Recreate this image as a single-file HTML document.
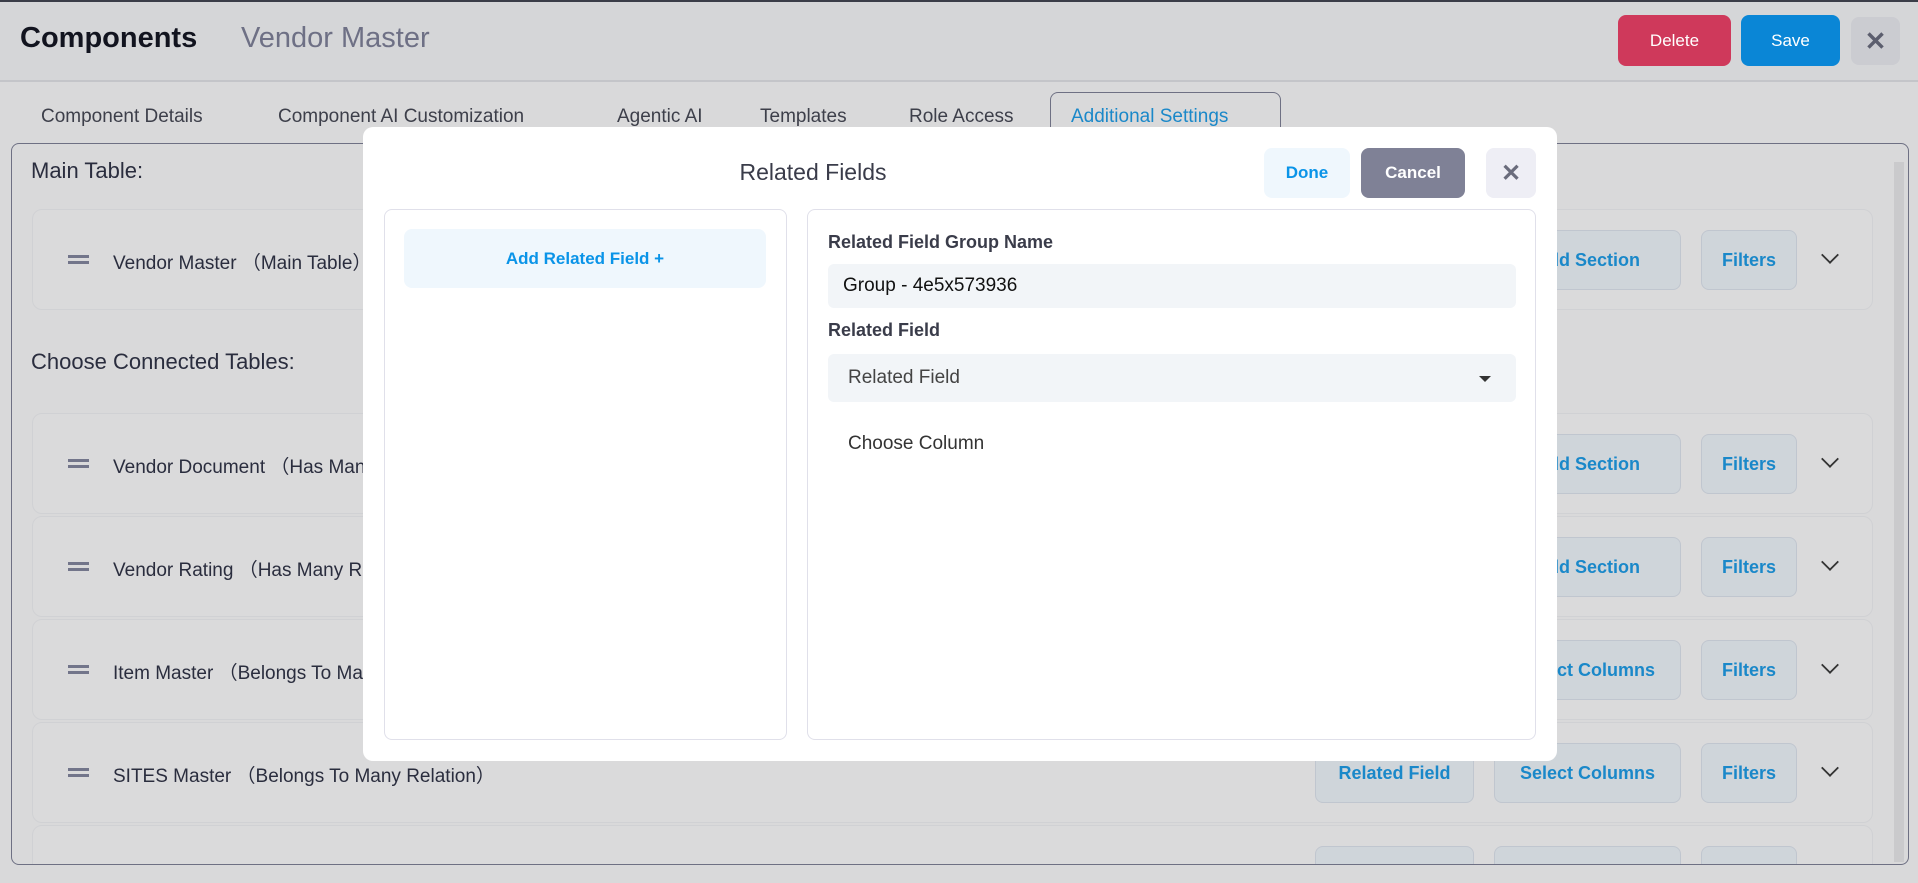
<!DOCTYPE html>
<html><head><meta charset="utf-8"><style>
*{box-sizing:border-box;margin:0;padding:0}
body{width:1918px;height:883px;overflow:hidden;background:#d9d9da;font-family:"Liberation Sans",sans-serif;position:relative;color:#2a2d3e}
.a{position:absolute}
.hdr{left:0;top:0;width:1918px;height:82px;background:#d5d6d8;border-bottom:2px solid #c4c5c9;border-top:2px solid #3a3d48}
.btn{position:absolute;display:flex;align-items:center;justify-content:center;border-radius:8px;font-weight:bold;font-size:17px}
.tab{position:absolute;top:106px;font-size:19px;color:#3d3f4a}
.panel{left:11px;top:143px;width:1898px;height:722px;border:1.5px solid #6e7083;border-radius:8px;overflow:hidden}
.row{position:absolute;left:20px;width:1841px;height:101px;border:1.5px solid #d0d1d4;border-radius:10px;background:#dadadb}
.row .t{position:absolute;left:80px;top:38px;font-size:19px;color:#2a2d3e}
.row .h{position:absolute;left:35px;top:45px;width:21px;height:3px;background:#72758a;box-shadow:0 6px 0 #72758a}
.rb{position:absolute;top:20px;height:60px;border:1.5px solid #c0c6cf;border-radius:8px;background:#cfd5da;color:#1a88c9;font-weight:bold;font-size:18px;display:flex;align-items:center;justify-content:center}
.chev{position:absolute;left:1790px;top:38px;width:14px;height:14px;border-right:2px solid #333;border-bottom:2px solid #333;transform:rotate(45deg) scale(.9,.9)}
.modal{left:363px;top:127px;width:1194px;height:634px;background:#fff;border-radius:10px}
.lbl{position:absolute;font-weight:bold;font-size:18px;color:#3a3c4a}
</style></head><body>
<div class="a hdr"></div>
<div class="a" style="left:20px;top:22px;font-size:29px;font-weight:bold;color:#12141f">Components</div>
<div class="a" style="left:241px;top:22px;font-size:29px;color:#6e7085">Vendor Master</div>
<div class="btn" style="left:1618px;top:15px;width:113px;height:51px;background:#cf395b;color:#fff;font-weight:normal">Delete</div>
<div class="btn" style="left:1741px;top:15px;width:99px;height:51px;background:#0a86d6;color:#fff;font-weight:normal">Save</div>
<div class="btn" style="left:1851px;top:17px;width:49px;height:48px;background:#cbccd1;color:#5c5e6e;font-size:26px">✕</div>
<div class="tab" style="left:41px">Component Details</div>
<div class="tab" style="left:278px">Component AI Customization</div>
<div class="tab" style="left:617px">Agentic AI</div>
<div class="tab" style="left:760px">Templates</div>
<div class="tab" style="left:909px">Role Access</div>
<div class="a" style="left:1050px;top:92px;width:231px;height:60px;border:1.5px solid #6e7083;border-bottom:none;border-radius:8px 8px 0 0;background:#d9d9da"></div>
<div class="tab" style="left:1071px;color:#1a88c9">Additional Settings</div>
<div class="a panel">
<div class="a" style="left:19px;top:14px;font-size:22px;color:#2a2d3e">Main Table:</div>
<div class="row" style="top:65px"><div class="h"></div><div class="t">Vendor Master （Main Table）</div>
<div class="rb" style="left:1461px;width:187px">Add Section</div><div class="rb" style="left:1668px;width:96px">Filters</div><div class="chev"></div></div>
<div class="a" style="left:19px;top:205px;font-size:22px;color:#2a2d3e">Choose Connected Tables:</div>
<div class="row" style="top:269px"><div class="h"></div><div class="t">Vendor Document （Has Many Relation）</div>
<div class="rb" style="left:1461px;width:187px">Add Section</div><div class="rb" style="left:1668px;width:96px">Filters</div><div class="chev"></div></div>
<div class="row" style="top:372px"><div class="h"></div><div class="t">Vendor Rating （Has Many Relation）</div>
<div class="rb" style="left:1461px;width:187px">Add Section</div><div class="rb" style="left:1668px;width:96px">Filters</div><div class="chev"></div></div>
<div class="row" style="top:475px"><div class="h"></div><div class="t">Item Master （Belongs To Many Relation）</div>
<div class="rb" style="left:1282px;width:159px">Related Field</div><div class="rb" style="left:1461px;width:187px">Select Columns</div><div class="rb" style="left:1668px;width:96px">Filters</div><div class="chev"></div></div>
<div class="row" style="top:578px"><div class="h"></div><div class="t">SITES Master （Belongs To Many Relation）</div>
<div class="rb" style="left:1282px;width:159px">Related Field</div><div class="rb" style="left:1461px;width:187px">Select Columns</div><div class="rb" style="left:1668px;width:96px">Filters</div><div class="chev"></div></div>
<div class="row" style="top:681px"><div class="rb" style="left:1282px;width:159px"></div><div class="rb" style="left:1461px;width:187px"></div><div class="rb" style="left:1668px;width:96px"></div></div>
<div class="a" style="left:1882px;top:18px;width:10px;height:700px;background:#cacacc"></div>
</div>
<div class="a modal">
<div class="a" style="left:0;width:900px;top:32px;text-align:center;font-size:23px;color:#3a3c4a">Related Fields</div>
<div class="btn" style="left:901px;top:21px;width:86px;height:50px;background:#eff7fd;color:#0a94e8">Done</div>
<div class="btn" style="left:998px;top:21px;width:104px;height:50px;background:#7f8196;color:#fff">Cancel</div>
<div class="btn" style="left:1123px;top:21px;width:50px;height:50px;background:#eeeef5;color:#6a6c7c;font-size:24px">✕</div>
<div class="a" style="left:21px;top:82px;width:403px;height:531px;border:1.5px solid #e0e0ea;border-radius:8px">
<div class="btn" style="left:19px;top:19px;width:362px;height:59px;background:#eff7fd;color:#0a94e8">Add Related Field +</div></div>
<div class="a" style="left:444px;top:82px;width:729px;height:531px;border:1.5px solid #e0e0ea;border-radius:8px">
<div class="lbl" style="left:20px;top:22px">Related Field Group Name</div>
<div class="a" style="left:20px;top:54px;width:688px;height:44px;background:#f2f5f8;border-radius:6px;font-size:19px;padding:11px 15px;color:#111">Group - 4e5x573936</div>
<div class="lbl" style="left:20px;top:110px">Related Field</div>
<div class="a" style="left:20px;top:144px;width:688px;height:48px;background:#f2f5f8;border-radius:6px;font-size:19px;padding:13px 20px;color:#444">Related Field</div>
<div class="a" style="left:671px;top:166px;border-left:6px solid transparent;border-right:6px solid transparent;border-top:6px solid #333"></div>
<div class="a" style="left:40px;top:223px;font-size:19px;color:#333">Choose Column</div>
</div>
</div>
</body></html>
